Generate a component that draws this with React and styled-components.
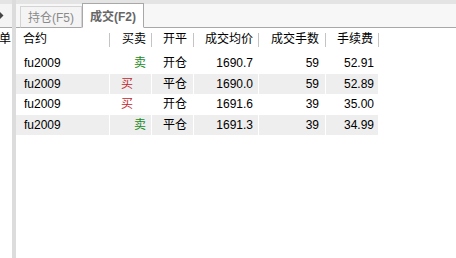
import React from 'react';
import styled, { createGlobalStyle } from 'styled-components';

const GlobalStyle = createGlobalStyle`
  html, body {
    margin: 0;
    padding: 0;
    background: #ffffff;
  }
  body {
    font-family: "Liberation Sans", "Noto Sans CJK SC", sans-serif;
    font-size: 12px;
    color: #000;
  }
`;

const COLS = '94px 42px 42px 65px 67px 53px';

const Frame = styled.div`
  display: flex;
  width: 456px;
  height: 258px;
  overflow: hidden;
  background: #fff;
`;

const SideStrip = styled.div`
  width: 12px;
  overflow: hidden;
  display: flex;
  flex-direction: column;
  align-items: flex-end;
  background: #fff;
`;

const SideTop = styled.div`
  height: 28px;
  width: 100%;
  background: #f4f4f4;
  border-bottom: 1px solid #a8a8a8;
  box-sizing: border-box;
  position: relative;
  overflow: hidden;
  &::before {
    content: '';
    display: block;
    height: 4px;
    background: #e4e4e4;
  }
`;

const Arrow = styled.svg`
  position: absolute;
  left: 0;
  top: 12px;
`;

const SideLabel = styled.div`
  height: 22px;
  line-height: 22px;
  white-space: nowrap;
  margin-right: 1px;
`;

const Divider = styled.div`
  width: 4px;
  background: #dcdcdc;
`;

const Main = styled.div`
  flex: 1;
  display: flex;
  flex-direction: column;
`;

const TabBar = styled.div`
  height: 28px;
  box-sizing: border-box;
  display: flex;
  align-items: flex-end;
  padding-left: 4px;
  background: linear-gradient(#e4e4e4 0, #e4e4e4 4px, #f7f7f7 4px);
  border-bottom: 1px solid #a8a8a8;
`;

const Tab = styled.div`
  height: ${({ active }) => (active ? '25px' : '22px')};
  box-sizing: border-box;
  padding: 0 7px 1px;
  margin-bottom: -1px;
  display: flex;
  align-items: center;
  border: 1px solid ${({ active }) => (active ? '#a8a8a8' : '#d4d4d4')};
  border-bottom: ${({ active }) => (active ? '1px solid #fff' : '1px solid #a8a8a8')};
  background: ${({ active }) => (active ? '#ffffff' : '#f4f4f4')};
  color: ${({ active }) => (active ? '#666666' : '#8a8a8a')};
  font-weight: ${({ active }) => (active ? 'bold' : 'normal')};
  font-size: 12px;
`;

const Grid = styled.div`
  display: grid;
  grid-template-columns: ${COLS};
  width: max-content;
`;

const HeaderCell = styled.div`
  height: 22px;
  line-height: 22px;
  padding-left: ${({ pad }) => pad}px;
  position: relative;
  white-space: nowrap;
  &::after {
    content: '';
    position: absolute;
    right: 0;
    top: 5px;
    width: 1px;
    height: 14px;
    background: #c4c4c4;
  }
`;

const Body = styled.div`
  padding-top: 3px;
`;

const Cell = styled.div`
  height: 20.5px;
  line-height: 20px;
  box-sizing: border-box;
  white-space: nowrap;
  background: ${({ stripe }) => (stripe ? '#eeeeee' : '#ffffff')};
  border-right: 1px solid #fff;
  text-align: ${({ align }) => align || 'left'};
  padding-left: ${({ pl }) => pl || 0}px;
  padding-right: ${({ pr }) => pr || 0}px;
  color: ${({ tone }) => (tone === 'sell' ? '#1f8a1f' : tone === 'buy' ? '#c2282f' : '#000')};
`;

const headers = [
  { label: '合约', pad: 7 },
  { label: '买卖', pad: 12 },
  { label: '开平', pad: 11 },
  { label: '成交均价', pad: 11 },
  { label: '成交手数', pad: 12 },
  { label: '手续费', pad: 11 },
];

const trades = [
  { code: 'fu2009', side: '卖', open: '开仓', price: '1690.7', qty: 59, fee: '52.91' },
  { code: 'fu2009', side: '买', open: '平仓', price: '1690.0', qty: 59, fee: '52.89' },
  { code: 'fu2009', side: '买', open: '开仓', price: '1691.6', qty: 39, fee: '35.00' },
  { code: 'fu2009', side: '卖', open: '平仓', price: '1691.3', qty: 39, fee: '34.99' },
];

export default function App() {
  return (
    <>
      <GlobalStyle />
      <Frame>
        <SideStrip>
          <SideTop>
            <Arrow width="4" height="7" viewBox="0 0 4 7">
              <path d="M0 0 L3.5 3.5 L0 7 Z" fill="#444" />
            </Arrow>
          </SideTop>
          <SideLabel>单</SideLabel>
        </SideStrip>
        <Divider />
        <Main>
          <TabBar>
            <Tab>持仓(F5)</Tab>
            <Tab active>成交(F2)</Tab>
          </TabBar>
          <Grid>
            {headers.map(h => (
              <HeaderCell key={h.label} pad={h.pad}>
                {h.label}
              </HeaderCell>
            ))}
          </Grid>
          <Body>
            <Grid>
              {trades.map((t, i) => {
                const stripe = i % 2 === 1;
                const sell = t.side === '卖';
                return (
                  <React.Fragment key={i}>
                    <Cell stripe={stripe} pl={8}>{t.code}</Cell>
                    <Cell
                      stripe={stripe}
                      tone={sell ? 'sell' : 'buy'}
                      align={sell ? 'right' : 'left'}
                      pl={sell ? 0 : 11}
                      pr={sell ? 5 : 0}
                    >
                      {t.side}
                    </Cell>
                    <Cell stripe={stripe} pl={11}>{t.open}</Cell>
                    <Cell stripe={stripe} align="right" pr={5}>{t.price}</Cell>
                    <Cell stripe={stripe} align="right" pr={6}>{t.qty}</Cell>
                    <Cell stripe={stripe} align="right" pr={4}>{t.fee}</Cell>
                  </React.Fragment>
                );
              })}
            </Grid>
          </Body>
        </Main>
      </Frame>
    </>
  );
}
